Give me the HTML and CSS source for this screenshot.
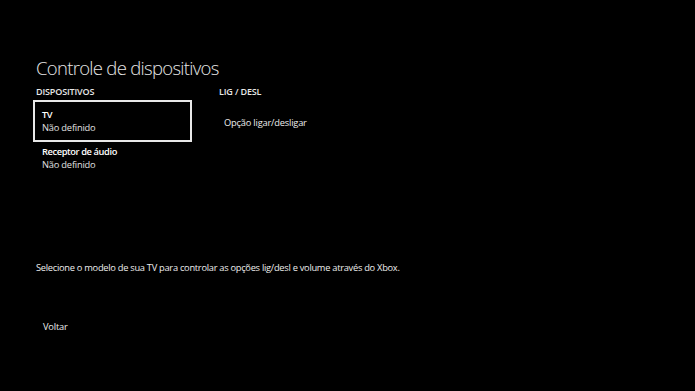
FILE: index.html
```html
<!DOCTYPE html>
<html>
<head>
  <title>Controle de dispositivos</title>
  <link rel="stylesheet" href="styles.css">
</head>
<body>
  <div class="page">
    <h1 class="title">Controle de dispositivos</h1>
    <div class="columns">
      <div class="col-devices">
        <div class="col-header">DISPOSITIVOS</div>
        <div class="device focused">
          <div class="device-name">TV</div>
          <div class="device-state">Não definido</div>
        </div>
        <div class="device">
          <div class="device-name">Receptor de áudio</div>
          <div class="device-state">Não definido</div>
        </div>
      </div>
      <div class="col-power">
        <div class="col-header">LIG / DESL</div>
        <div class="power-option">Opção ligar/desligar</div>
      </div>
    </div>
    <p class="hint">Selecione o modelo de sua TV para controlar as opções lig/desl e volume através do Xbox.</p>
    <div class="back">Voltar</div>
  </div>
</body>
</html>
```

FILE: styles.css
```css
body {
  margin: 0;
  background-color: #000;
  color: #f2f2f2;
  font-family: "Open Sans", "DejaVu Sans", sans-serif;
}
.page {
  width: 695px;
  height: 391px;
  padding: 56px 0 0 36px;
  box-sizing: border-box;
}
.title {
  margin: 0;
  font-size: 18.5px;
  line-height: 24px;
  font-weight: 300;
  letter-spacing: -0.7px;
  color: #e6e6e6;
}
.columns {
  display: flex;
  gap: 27px;
  margin-top: 6px;
}
.col-devices {
  width: 156px;
}
.col-header {
  font-size: 9px;
  line-height: 12px;
  font-weight: 600;
  letter-spacing: -0.15px;
  color: #e8e8e8;
  height: 14px;
}
.device {
  width: 159px;
  box-sizing: border-box;
  margin-left: -3px;
  border: 2px solid transparent;
  padding: 1px 7px 6px;
  font-size: 9.3px;
  line-height: 13px;
  letter-spacing: -0.2px;
}
.device.focused {
  border-color: #e8e8e8;
  padding: 6px 7px 6px;
}
.device-name {
  font-weight: 600;
  letter-spacing: -0.4px;
  color: #fff;
}
.device-state {
  color: #e0e0e0;
}
.power-option {
  font-size: 9.3px;
  line-height: 13px;
  letter-spacing: -0.2px;
  margin: 16px 0 0 5px;
  color: #ededed;
}
.hint {
  margin: 83px 0 0;
  font-size: 9.3px;
  line-height: 12px;
  letter-spacing: -0.28px;
  color: #ededed;
}
.back {
  margin: 47px 0 0 7px;
  font-size: 9.3px;
  line-height: 12px;
  letter-spacing: -0.2px;
  color: #ededed;
}
```
